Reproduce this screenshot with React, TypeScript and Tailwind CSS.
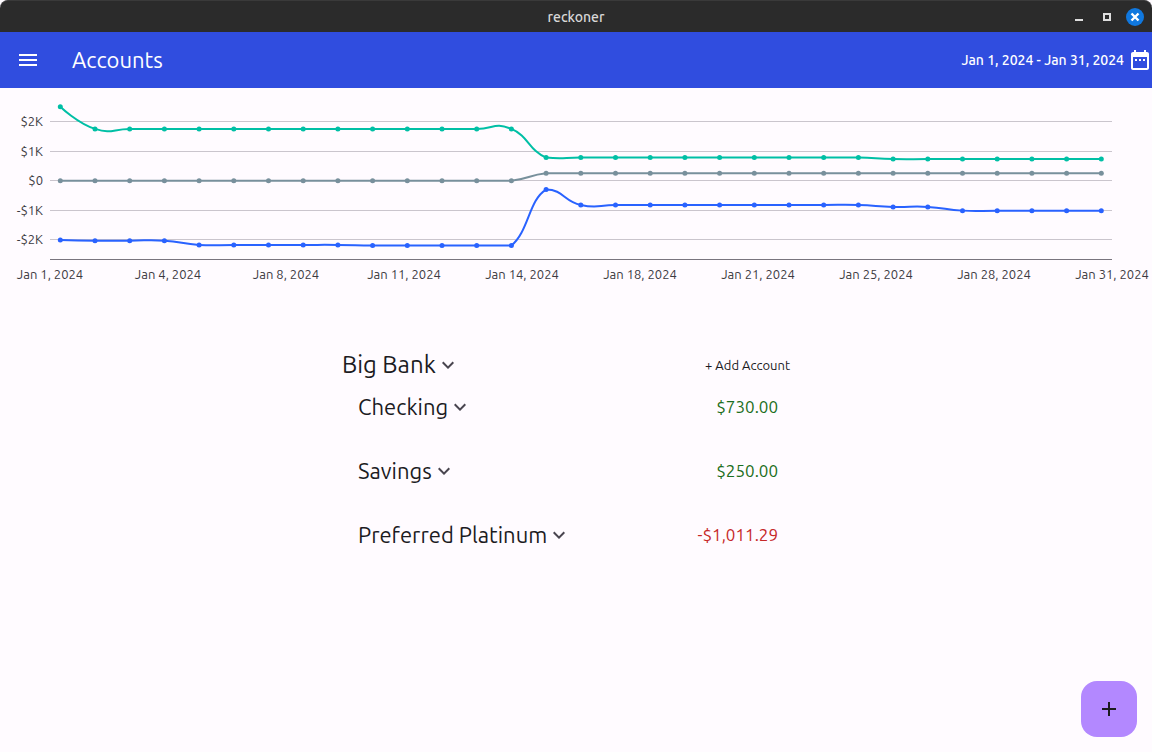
import { useState } from "react";

const START = 60.3;
const STEP = 34.7;
const ZERO = 92.7;
const PER_K = 29.6;

type Series = {
  name: string;
  color: string;
  values: number[];
  // how strongly the curve bends when it enters or leaves a day (1 by default)
  enter?: Record<number, number>;
  leave?: Record<number, number>;
};

const repeat = (value: number, times: number) => Array.from({ length: times }, () => value);

const series: Series[] = [
  {
    name: "Savings",
    color: "#78909c",
    values: [...repeat(0, 14), ...repeat(250, 17)],
    enter: { 13: 0 },
    leave: { 14: 0 },
  },
  {
    name: "Preferred Platinum",
    color: "#2962ff",
    values: [
      -2000,
      ...repeat(-2025, 3),
      ...repeat(-2170, 5),
      ...repeat(-2190, 5),
      -300,
      ...repeat(-820, 9),
      ...repeat(-885, 2),
      ...repeat(-1011, 5),
    ],
    enter: { 13: 0 },
    leave: { 14: 0 },
  },
  {
    name: "Checking",
    color: "#00bfa5",
    values: [2500, ...repeat(1750, 13), ...repeat(780, 10), ...repeat(730, 7)],
    leave: { 14: 0.2 },
  },
];

const yTicks = [
  { label: "$2K", value: 2000 },
  { label: "$1K", value: 1000 },
  { label: "$0", value: 0 },
  { label: "-$1K", value: -1000 },
  { label: "-$2K", value: -2000 },
];

const xTicks = [
  "Jan 1, 2024",
  "Jan 4, 2024",
  "Jan 8, 2024",
  "Jan 11, 2024",
  "Jan 14, 2024",
  "Jan 18, 2024",
  "Jan 21, 2024",
  "Jan 25, 2024",
  "Jan 28, 2024",
  "Jan 31, 2024",
];

const accounts = [
  { name: "Checking", balance: "$730.00", negative: false },
  { name: "Savings", balance: "$250.00", negative: false },
  { name: "Preferred Platinum", balance: "-$1,011.29", negative: true },
];

const toX = (i: number) => START + i * STEP;
const toY = (value: number) => ZERO - (value / 1000) * PER_K;

const linePath = ({ values, enter = {}, leave = {} }: Series) => {
  const pts = values.map((v, i) => ({ x: toX(i), y: toY(v) }));
  let d = `M${pts[0].x} ${pts[0].y}`;
  let tx = 0;
  let ty = 0;
  for (let i = 1; i < pts.length; i++) {
    const prev = pts[i - 1];
    const cur = pts[i];
    const next = pts[i + 1] ?? cur;
    const c1 = `${prev.x + tx} ${prev.y + ty * (leave[i - 1] ?? 1)}`;
    tx = (next.x - prev.x) / 4;
    ty = (next.y - prev.y) / 4;
    d += `C${c1} ${cur.x - tx} ${cur.y - ty * (enter[i] ?? 1)} ${cur.x} ${cur.y}`;
  }
  return d;
};

const Chevron = () => (
  <svg viewBox="0 0 24 24" className="size-6 text-[#49454f]" fill="currentColor" aria-hidden="true">
    <path d="M7.41 8.59 12 13.17l4.59-4.58L18 10l-6 6-6-6z" />
  </svg>
);

const TitleBar = () => (
  <div className="grid h-8 grid-cols-[1fr_auto_1fr] items-center rounded-t-lg border-t border-[#3a3a3a] bg-[#2b2b2b] px-2">
    <span className="col-start-2 text-sm font-medium text-[#d8d8d8]">reckoner</span>
    <div className="flex items-center justify-end gap-2.5">
      <button aria-label="Minimize" className="grid size-[18px] place-items-center">
        <svg viewBox="0 0 18 18" className="size-[18px]">
          <path d="M5 12h8" stroke="#dedede" strokeWidth="2" />
        </svg>
      </button>
      <button aria-label="Maximize" className="grid size-[18px] place-items-center">
        <svg viewBox="0 0 18 18" className="size-[18px]" fill="none">
          <path d="M6 6h6v6H6z" stroke="#dedede" strokeWidth="2" />
        </svg>
      </button>
      <button aria-label="Close" className="grid size-[18px] place-items-center rounded-full bg-[#1078df]">
        <svg viewBox="0 0 18 18" className="size-[18px]">
          <path d="m5.5 5.5 7 7m0-7-7 7" stroke="#fff" strokeWidth="2.4" />
        </svg>
      </button>
    </div>
  </div>
);

const AppBar = () => (
  <header className="flex h-14 items-center bg-[#304ddf] text-white">
    <button aria-label="Menu" className="grid size-14 place-items-center">
      <svg viewBox="0 0 24 24" className="size-6" fill="currentColor">
        <path d="M3 18h18v-2H3v2zm0-5h18v-2H3v2zm0-7v2h18V6H3z" />
      </svg>
    </button>
    <h1 className="ml-4 text-[22px] leading-8">Accounts</h1>
    <button className="ml-auto flex items-center gap-1 text-sm font-medium">
      Jan 1, 2024 - Jan 31, 2024
      <svg viewBox="0 0 24 24" className="size-6" fill="currentColor" aria-hidden="true">
        <path d="M9 11H7v2h2v-2zm4 0h-2v2h2v-2zm4 0h-2v2h2v-2zm2-7h-1V2h-2v2H8V2H6v2H5c-1.11 0-1.99.9-1.99 2L3 20c0 1.1.89 2 2 2h14c1.1 0 2-.9 2-2V6c0-1.1-.9-2-2-2zm0 16H5V9h14v11z" />
      </svg>
    </button>
  </header>
);

const BalanceChart = () => (
  <svg viewBox="0 0 1152 199" className="block w-full" role="img" aria-label="Account balances">
    {yTicks.map((tick) => (
      <g key={tick.label}>
        <path d={`M50 ${Math.floor(toY(tick.value)) + 0.5}H1112`} stroke="#cac5cd" />
        <text x="43" y={Math.floor(toY(tick.value)) + 5} textAnchor="end" className="fill-[#3c3a3f] text-[13px]">
          {tick.label}
        </text>
      </g>
    ))}
    <path d="M50 171.5H1112" stroke="#79747e" />
    {xTicks.map((label, i) => (
      <text key={label} x={50 + i * 118} y="191" textAnchor="middle" className="fill-[#3c3a3f] text-[13px]">
        {label}
      </text>
    ))}
    {series.map((s) => (
      <g key={s.name}>
        <path d={linePath(s)} fill="none" stroke={s.color} strokeWidth="2" />
        {s.values.map((v, i) => (
          <circle key={i} cx={toX(i)} cy={toY(v)} r="2.5" fill={s.color} />
        ))}
      </g>
    ))}
  </svg>
);

export default function App() {
  const [open, setOpen] = useState(true);

  return (
    <div className="relative flex min-h-screen flex-col bg-[#fffbff] font-['Ubuntu','Noto_Sans',sans-serif] text-[#1c1b1f]">
      <TitleBar />
      <AppBar />
      <BalanceChart />

      <main className="mx-auto mt-14 w-full max-w-[468px] pr-3">
        <div className="flex h-11 items-center justify-between">
          <button onClick={() => setOpen(!open)} className="flex items-center text-2xl">
            Big Bank
            <Chevron />
          </button>
          <button className="pr-2 text-[13px] leading-5">+ Add Account</button>
        </div>
        {open && (
          <ul className="pr-5 pl-4">
            {accounts.map((account) => (
              <li key={account.name} className="mb-6 flex h-10 items-center justify-between">
                <button className="flex items-center text-[22px] leading-8">
                  {account.name}
                  <Chevron />
                </button>
                <span
                  className={
                    account.negative ? "text-[17px] leading-6 text-[#c62828]" : "text-[17px] leading-6 text-[#1b6e20]"
                  }
                >
                  {account.balance}
                </span>
              </li>
            ))}
          </ul>
        )}
      </main>

      <button
        aria-label="Add"
        className="absolute right-[15px] bottom-[15px] grid size-14 place-items-center rounded-2xl bg-[#b388ff]"
      >
        <svg viewBox="0 0 24 24" className="size-6" fill="currentColor">
          <path d="M19 13h-6v6h-2v-6H5v-2h6V5h2v6h6v2z" />
        </svg>
      </button>
    </div>
  );
}
